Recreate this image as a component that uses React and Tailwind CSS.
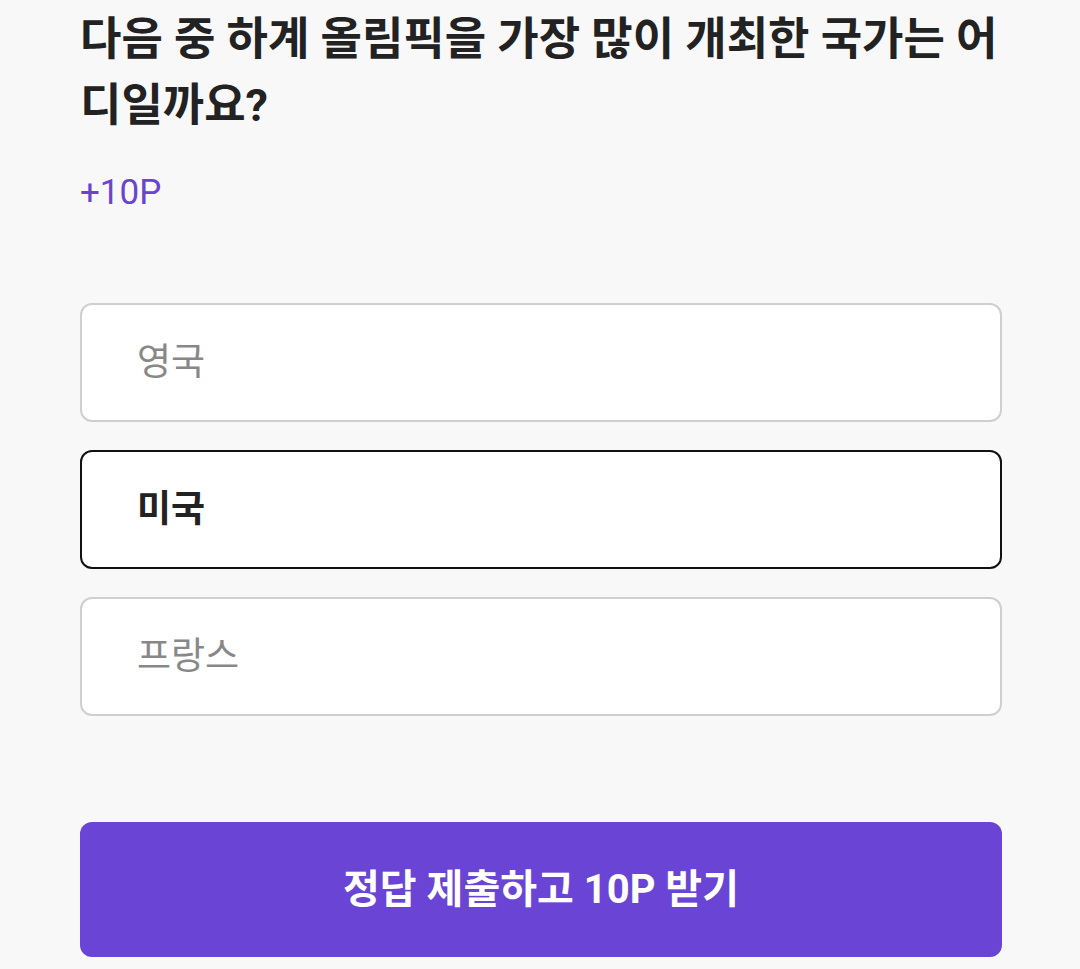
export default function App() {
  const options = [
    { label: "영국", selected: false },
    { label: "미국", selected: true },
    { label: "프랑스", selected: false },
  ];
  return (
    <div
      className="min-h-[969px] w-[1080px] bg-[#f8f8f8] pl-[80px] pr-[78px] pt-[7px]"
      style={{ fontFamily: "Roboto, 'Noto Sans CJK KR', sans-serif" }}
    >
      <h1 className="text-[45px] font-bold leading-[66px] text-[#222222]">
        다음 중 하계 올림픽을 가장 많이 개최한 국가는 어디일까요?
      </h1>
      <div className="mt-[34px] text-[35px] leading-[40px] text-[#6a44d0]">+10P</div>
      <div className="mt-[90px] flex flex-col gap-[28px]">
        {options.map((o) => (
          <div
            key={o.label}
            className={
              o.selected
                ? "flex h-[119px] items-center rounded-[12px] border-2 border-[#111111] bg-white pl-[55px] text-[37px] font-bold text-[#222222]"
                : "flex h-[119px] items-center rounded-[12px] border-2 border-[#cfcfcf] bg-white pl-[55px] text-[37px] text-[#888888]"
            }
          >
            {o.label}
          </div>
        ))}
      </div>
      <button className="mt-[106px] flex h-[135px] w-full items-center justify-center rounded-[12px] bg-[#6a44d4] text-[40px] font-bold text-white">
        정답 제출하고 10P 받기
      </button>
    </div>
  );
}
